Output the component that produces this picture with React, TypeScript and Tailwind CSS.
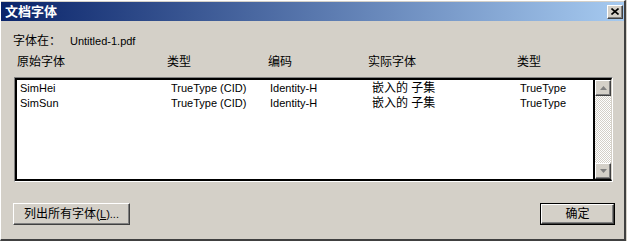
import React from "react";

const fuente = "font-['Liberation_Sans','Noto_Sans_CJK_SC',sans-serif]";
const zh = "text-[12px] leading-[14px]";
const en = "text-[11px] leading-[14px]";

const filas = [
  { nombre: "SimHei", tipo: "TrueType (CID)", codigo: "Identity-H", real: "嵌入的 子集", tipoReal: "TrueType" },
  { nombre: "SimSun", tipo: "TrueType (CID)", codigo: "Identity-H", real: "嵌入的 子集", tipoReal: "TrueType" },
];

const relieve =
  "border border-t-white border-l-white border-r-[#404040] border-b-[#404040] shadow-[inset_-1px_-1px_0_#808080] bg-[#d4d0c8]";

const Flecha = ({ abajo }: { abajo?: boolean }) => (
  <div className={`w-[16px] h-[16px] flex items-center justify-center ${relieve}`}>
    <svg width="7" height="4" viewBox="0 0 7 4">
      {abajo ? (
        <polygon points="0,0 7,0 3.5,4" fill="#808080" />
      ) : (
        <polygon points="3.5,0 7,4 0,4" fill="#808080" />
      )}
    </svg>
  </div>
);

export default function App() {
  return (
    <div className={`w-[627px] h-[241px] bg-[#d4d0c8] overflow-hidden ${fuente} text-black`}>
      <div className="w-[626px] h-full flex flex-col border-t border-l border-r-2 border-b-2 border-t-white border-l-white border-r-[#404040] border-b-[#404040]">
        {/* barra de título */}
        <div className="mt-px h-[19px] flex items-center justify-between bg-[linear-gradient(to_right,#0a246a,#a6caf0)]">
          <span className="pl-[4px] text-white font-bold text-[13px] leading-[14px]">文档字体</span>
          <button
            type="button"
            className={`mr-px w-[16px] h-[14px] flex items-center justify-center ${relieve}`}
          >
            <svg width="8" height="7" viewBox="0 0 8 7">
              <path d="M0.5 0.5 L7.5 6.5 M7.5 0.5 L0.5 6.5" stroke="#000" strokeWidth="1.6" />
            </svg>
          </button>
        </div>

        {/* archivo */}
        <div className="mt-[13px] pl-[12px] flex items-center h-[14px]">
          <span className={`${zh} w-[57px]`}>字体在：</span>
          <span className={en}>Untitled-1.pdf</span>
        </div>

        {/* cabeceras */}
        <div className="mt-[7px] pl-[16px] grid grid-cols-[150px_101px_100px_149px_80px] h-[14px]">
          <span className={zh}>原始字体</span>
          <span className={zh}>类型</span>
          <span className={zh}>编码</span>
          <span className={zh}>实际字体</span>
          <span className={zh}>类型</span>
        </div>

        {/* lista */}
        <div className="mt-[8px] ml-[13px] w-[599px] h-[105px] border border-t-[#808080] border-l-[#808080] border-r-white border-b-white">
          <div className="h-full flex border-t-2 border-l-2 border-b-2 border-r border-t-black border-l-black border-b-black border-r-[#d4d0c8]">
            <div className="flex-1 bg-white border-r-2 border-black pl-[3px]">
              {filas.map((f) => (
                <div key={f.nombre} className="grid grid-cols-[151px_99px_102px_148px_60px] h-[15px] items-center">
                  <span className={en}>{f.nombre}</span>
                  <span className={en}>{f.tipo}</span>
                  <span className={en}>{f.codigo}</span>
                  <span className={zh}>{f.real}</span>
                  <span className={en}>{f.tipoReal}</span>
                </div>
              ))}
            </div>
            <div className="w-[16px] flex flex-col">
              <Flecha />
              <div className="flex-1 bg-[repeating-conic-gradient(#d4d0c8_0%_25%,#ffffff_0%_50%)] bg-[length:2px_2px]" />
              <Flecha abajo />
            </div>
          </div>
        </div>

        {/* botones */}
        <div className="mt-[21px] pl-[12px] pr-[9px] flex justify-between">
          <button type="button" className={`w-[117px] h-[22px] flex items-center justify-center ${relieve}`}>
            <span className={zh}>列出所有字体(</span>
            <span className={`${en} underline`}>L</span>
            <span className={en}>)...</span>
          </button>
          <div className="border border-black">
            <button type="button" className={`w-[73px] h-[20px] flex items-center justify-center ${relieve}`}>
              <span className={zh}>确定</span>
            </button>
          </div>
        </div>
      </div>
    </div>
  );
}
